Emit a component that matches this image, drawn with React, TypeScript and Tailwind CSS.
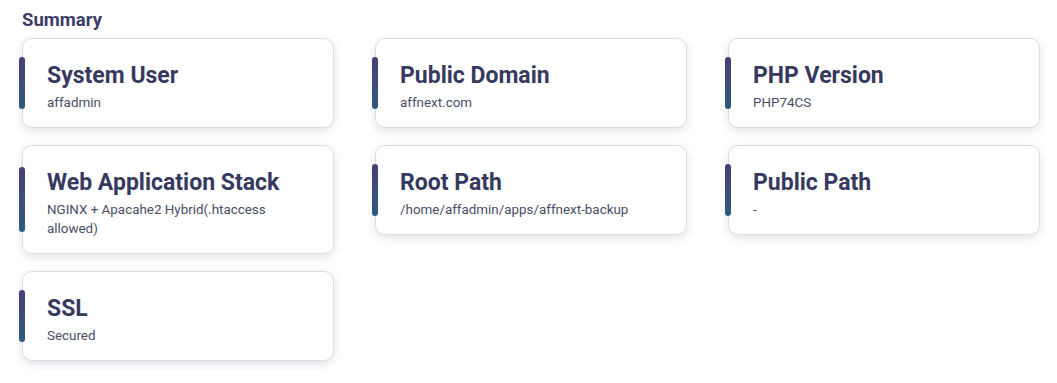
const items = [
  { title: "System User", value: "affadmin" },
  { title: "Public Domain", value: "affnext.com" },
  { title: "PHP Version", value: "PHP74CS" },
  { title: "Web Application Stack", value: "NGINX + Apacahe2 Hybrid(.htaccess allowed)" },
  { title: "Root Path", value: "/home/affadmin/apps/affnext-backup" },
  { title: "Public Path", value: "-" },
  { title: "SSL", value: "Secured" },
];

const SummaryCard = ({ title, value }: { title: string; value: string }) => {
  return (
    <div className="relative rounded-[10px] border border-[#dcdce6] bg-white pl-[24px] pr-4 pt-[23px] pb-[15px] shadow-[0_3px_10px_rgba(40,40,80,0.13)]">
      <div className="absolute left-[-4px] top-[20%] h-[60%] w-[6px] rounded-full bg-gradient-to-b from-[#473f76] to-[#2d5a7c]" />
      <h3 className="text-[23px] font-bold leading-[28px] text-[#363a5f]">{title}</h3>
      <p className="mt-[3px] text-[13.4px] leading-[19px] text-[#4a4d68]">{value}</p>
    </div>
  );
};

export default function App() {
  return (
    <div className="min-h-screen bg-white pl-[22px] pr-[17px] pt-[9px]" style={{ fontFamily: "Roboto, 'Liberation Sans', sans-serif" }}>
      <h2 className="text-[18.5px] font-bold leading-[22px] text-[#3b3d66]">Summary</h2>
      <div className="mt-[7px] grid grid-cols-3 items-start gap-x-[41px] gap-y-[17px]">
        {items.map((item) => (
          <SummaryCard key={item.title} title={item.title} value={item.value} />
        ))}
      </div>
    </div>
  );
}
